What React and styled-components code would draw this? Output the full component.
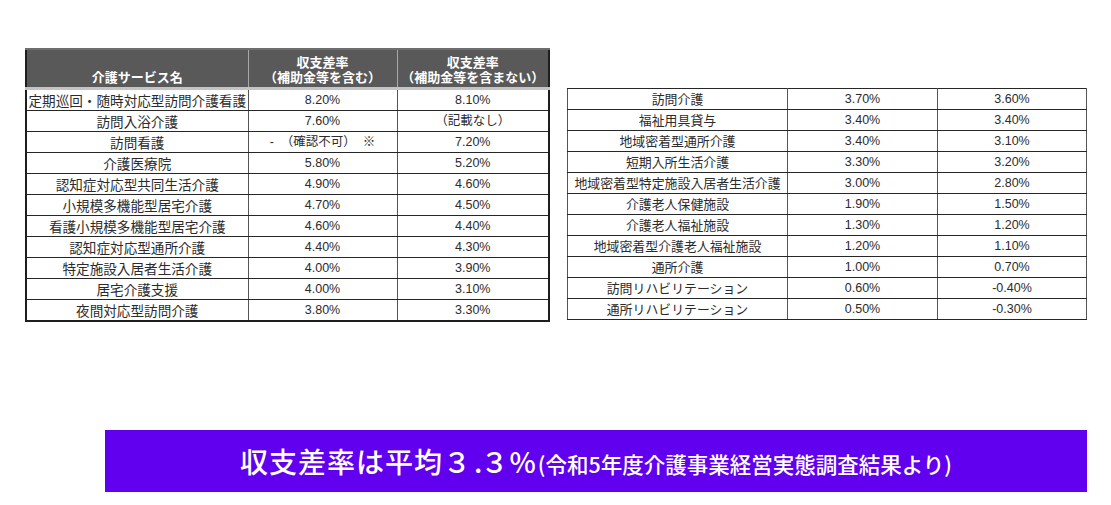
import React from "react";
import styled, { createGlobalStyle } from "styled-components";

const LEFT_ROWS = [
	["定期巡回・随時対応型訪問介護看護", "8.20%", "8.10%"],
	["訪問入浴介護", "7.60%", "（記載なし）"],
	["訪問看護", "-  （確認不可）  ※", "7.20%"],
	["介護医療院", "5.80%", "5.20%"],
	["認知症対応型共同生活介護", "4.90%", "4.60%"],
	["小規模多機能型居宅介護", "4.70%", "4.50%"],
	["看護小規模多機能型居宅介護", "4.60%", "4.40%"],
	["認知症対応型通所介護", "4.40%", "4.30%"],
	["特定施設入居者生活介護", "4.00%", "3.90%"],
	["居宅介護支援", "4.00%", "3.10%"],
	["夜間対応型訪問介護", "3.80%", "3.30%"],
];

const RIGHT_ROWS = [
	["訪問介護", "3.70%", "3.60%"],
	["福祉用具貸与", "3.40%", "3.40%"],
	["地域密着型通所介護", "3.40%", "3.10%"],
	["短期入所生活介護", "3.30%", "3.20%"],
	["地域密着型特定施設入居者生活介護", "3.00%", "2.80%"],
	["介護老人保健施設", "1.90%", "1.50%"],
	["介護老人福祉施設", "1.30%", "1.20%"],
	["地域密着型介護老人福祉施設", "1.20%", "1.10%"],
	["通所介護", "1.00%", "0.70%"],
	["訪問リハビリテーション", "0.60%", "-0.40%"],
	["通所リハビリテーション", "0.50%", "-0.30%"],
];

const GlobalStyle = createGlobalStyle`
	html, body {
		margin: 0;
		padding: 0;
		background: #ffffff;
	}
	body {
		font-family: "Liberation Sans", "Noto Sans CJK JP", sans-serif;
		color: #2b2b2b;
	}
`;

function App() {
	return (
		<Page>
			<GlobalStyle />
			<Tables>
				<LeftTable>
					<colgroup>
						<col style={{ width: 222 }} />
						<col style={{ width: 149 }} />
						<col style={{ width: 152 }} />
					</colgroup>
					<thead>
						<tr>
							<HeadCell><HeadLine>介護サービス名</HeadLine></HeadCell>
							<HeadCell>
								<HeadLine>収支差率</HeadLine>
								<HeadLine>（補助金等を含む）</HeadLine>
							</HeadCell>
							<HeadCell>
								<HeadLine>収支差率</HeadLine>
								<HeadLine>（補助金等を含まない）</HeadLine>
							</HeadCell>
						</tr>
					</thead>
					<tbody>
						{LEFT_ROWS.map(function(row, index) {
							return (
								<tr key={"l" + index}>
									<NameCell wide>{row[0]}</NameCell>
									<ValueCell>{row[1]}</ValueCell>
									<ValueCell>{row[2]}</ValueCell>
								</tr>
							);
						})}
					</tbody>
				</LeftTable>

				<RightTable>
					<colgroup>
						<col style={{ width: 220 }} />
						<col style={{ width: 150 }} />
						<col style={{ width: 149 }} />
					</colgroup>
					<tbody>
						{RIGHT_ROWS.map(function(row, index) {
							return (
								<tr key={"r" + index}>
									<NameCell>{row[0]}</NameCell>
									<ValueCell>{row[1]}</ValueCell>
									<ValueCell>{row[2]}</ValueCell>
								</tr>
							);
						})}
					</tbody>
				</RightTable>
			</Tables>

			<Banner>
				<BannerMain>収支差率は平均３<Dot>.</Dot>３%</BannerMain>
				<BannerNote>(令和5年度介護事業経営実態調査結果より)</BannerNote>
			</Banner>
		</Page>
	);
}

const Page = styled.div`
	width: 1111px;
	height: 505px;
	padding: 48px 0 0 25px;
	box-sizing: border-box;
	display: flex;
	flex-direction: column;
`;

const Tables = styled.div`
	display: flex;
	align-items: flex-start;
	gap: 17px;
`;

const BaseTable = styled.table`
	border-collapse: collapse;
	table-layout: fixed;
	font-size: 12.5px;

	td {
		height: 20px;
		padding: 0;
		text-align: center;
		vertical-align: middle;
		line-height: 20px;
		white-space: pre;
		border-top: 1px solid #262626;
		border-bottom: 1px solid #262626;
		border-left: 1px solid #555;
		border-right: 1px solid #555;
	}
`;

const LeftTable = styled(BaseTable)`
	width: 523px;
	border: 2px solid #1e1e1e;

	thead th {
		border-bottom: 3px solid #c4c4c4;
	}
`;

const RightTable = styled(BaseTable)`
	width: 519px;
	margin-top: 40px;
	border: 1px solid #1e1e1e;

	td {
		height: 19.9px;
	}
`;

const HeadCell = styled.th`
	height: 34px;
	padding: 0 0 3px 0;
	background: #595959;
	color: #ffffff;
	font-family: "Noto Sans CJK JP", sans-serif;
	font-weight: 700;
	font-size: 13px;
	vertical-align: bottom;
	text-align: center;
	border-left: 1px solid #a8a8a8;
	border-right: 1px solid #a8a8a8;
	border-top: 2px solid #6e6e6e;
`;

const HeadLine = styled.div`
	height: 15px;
	line-height: 15px;
	white-space: nowrap;
`;

const NameCell = styled.td`
	font-family: "Noto Sans CJK JP", sans-serif;
	font-size: ${props => (props.wide ? "13.6px" : "12.9px")};
	color: #2b2b2b;
`;

const ValueCell = styled.td`
	font-family: "Liberation Sans", "Noto Sans CJK JP", sans-serif;
	font-size: 12.5px;
	color: #2b2b2b;
`;

const Banner = styled.div`
	margin: 108px 0 0 80px;
	width: 982px;
	height: 62px;
	background: #6100ef;
	color: #ffffff;
	display: flex;
	align-items: center;
	justify-content: center;
	gap: 1px;
	font-family: "Noto Sans CJK JP", sans-serif;
	box-sizing: border-box;
`;

const BannerMain = styled.span`
	font-size: 28px;
	font-weight: 500;
	letter-spacing: 1px;
	line-height: 1;
`;

const Dot = styled.span`
	margin-left: 2px;
	letter-spacing: -2px;
`;

const BannerNote = styled.span`
	font-size: 21.5px;
	font-weight: 500;
	letter-spacing: 0;
	line-height: 1;
	margin-top: 5px;
`;

export default App;
